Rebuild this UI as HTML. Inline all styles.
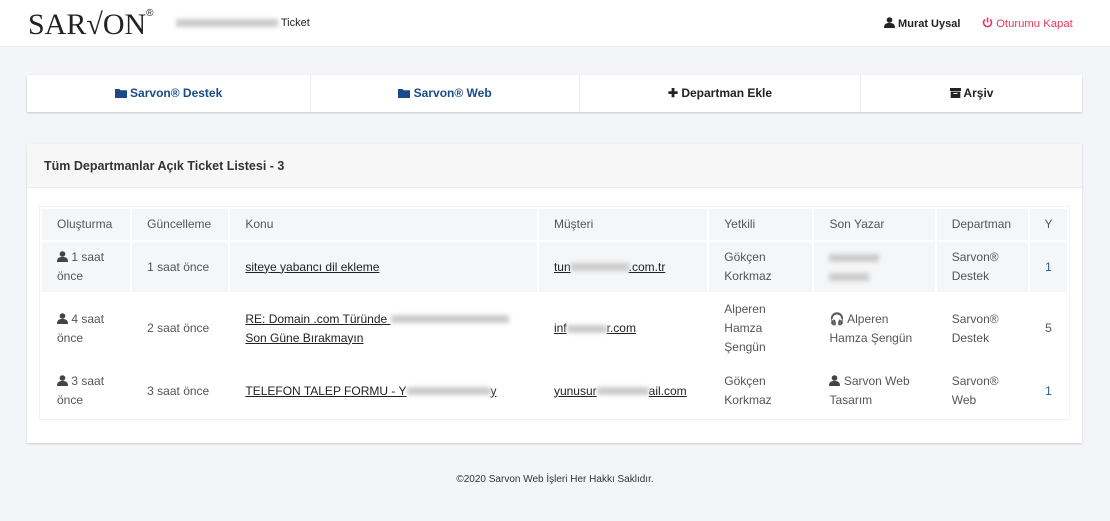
<!DOCTYPE html>
<html><head><meta charset="utf-8"><style>
*{box-sizing:border-box;margin:0;padding:0}
body{width:1110px;height:521px;background:#f4f5f8;font-family:"Liberation Sans",Arial,sans-serif;font-size:12px;color:#555;position:relative;overflow:hidden}
.top{position:absolute;left:0;top:0;width:1110px;height:47px;background:#fff;border-bottom:1px solid #e8e9ec}
.logo{position:absolute;left:28px;top:8px;font-family:"Liberation Serif",serif;font-size:30px;color:#222;letter-spacing:0}
.logo sup{font-size:10px;position:relative;top:-7px;font-family:"Liberation Sans",sans-serif}
.bc{position:absolute;left:176px;top:17px;font-size:11px;color:#222}
.blur{display:inline-block;background:#ccc;filter:blur(2px);height:8px;vertical-align:middle}
.usr{position:absolute;left:884px;top:17px;font-weight:bold;color:#222;font-size:11px}
.out{position:absolute;left:982px;top:17px;color:#e8345a;font-size:11.3px}
.nav{position:absolute;left:27px;top:75px;width:1055px;height:37px;background:#fff;box-shadow:0 1px 2px rgba(0,0,0,.18);font-weight:bold;font-size:12px}
.nav div{position:absolute;top:0;height:37px;line-height:37px;text-align:center;border-right:1px solid #eee}
.card{position:absolute;left:27px;top:144px;width:1055px;height:299px;background:#fff;box-shadow:0 1px 2px rgba(0,0,0,.15)}
.ch{height:44px;background:#f7f7f8;border-bottom:1px solid #eee;padding:15px 17px;font-weight:bold;color:#333;font-size:12.5px}
table{position:absolute;left:12px;top:62px;border-collapse:separate;border-spacing:2px;table-layout:fixed;width:1032px;border:1px solid #f3f3f3}
td{padding:0 14px 0 15px;line-height:19px;vertical-align:middle;color:#555}
tr.h td{height:31px;background:#f5f6f8}
tr.s td{background:#f5f6f8}
a{color:#222;text-decoration:underline}
.n{text-align:center;color:#1a5b9a;padding:0}
.ic{display:inline-block;vertical-align:-1px}
</style></head><body>
<div class="top">
<div class="logo">SAR√ON<sup>®</sup></div>
<div class="bc"><span class="blur" style="width:102px"></span> Ticket</div>
<div class="usr"><svg class="ic" width="11" height="11" viewBox="0 0 11 11"><circle cx="5.5" cy="3" r="2.8" fill="#222"/><path d="M0 11c0-4 2-5 5.5-5s5.5 1 5.5 5z" fill="#222"/></svg> Murat Uysal</div>
<div class="out"><svg class="ic" width="11" height="11" viewBox="0 0 11 11"><path d="M3 2.5A4 4 0 1 0 8 2.5" stroke="#e8345a" stroke-width="1.6" fill="none"/><path d="M5.5 0.5v5" stroke="#e8345a" stroke-width="1.6"/></svg> Oturumu Kapat</div>
</div>
<div class="nav">
<div style="left:0;width:284px;color:#1a4a8a"><svg class="ic" width="12" height="10" viewBox="0 0 12 10"><path d="M0 1h4.5l1 1.3H12V10H0z" fill="#1a4a8a"/></svg> Sarvon® Destek</div>
<div style="left:284px;width:269px;color:#1a4a8a"><svg class="ic" width="12" height="10" viewBox="0 0 12 10"><path d="M0 1h4.5l1 1.3H12V10H0z" fill="#1a4a8a"/></svg> Sarvon® Web</div>
<div style="left:553px;width:281px;color:#222">✚ Departman Ekle</div>
<div style="left:834px;width:221px;color:#222;border:none"><svg class="ic" width="11" height="10" viewBox="0 0 11 10"><rect x="0" y="0" width="11" height="3" fill="#222"/><rect x="0.7" y="3.6" width="9.6" height="6.4" fill="#222"/><rect x="3.5" y="5" width="4" height="1" fill="#fff"/></svg> Arşiv</div>
</div>
<div class="card">
<div class="ch">Tüm Departmanlar Açık Ticket Listesi - 3</div>
<table style="width:1031px">
<colgroup><col style="width:88px"><col style="width:96px"><col style="width:306px"><col style="width:168px"><col style="width:103px"><col style="width:120px"><col style="width:91px"><col style="width:37px"></colgroup>
<tr class="h"><td>Oluşturma</td><td>Güncelleme</td><td>Konu</td><td>Müşteri</td><td>Yetkili</td><td>Son Yazar</td><td>Departman</td><td class="n" style="color:#555">Y</td></tr>
<tr class="s" style="height:50px"><td><svg class="ic" width="11" height="11" viewBox="0 0 11 11"><circle cx="5.5" cy="3" r="2.8" fill="#444"/><path d="M0 11c0-4 2-5 5.5-5s5.5 1 5.5 5z" fill="#444"/></svg> 1 saat önce</td><td>1 saat önce</td><td><a>siteye yabancı dil ekleme</a></td><td><a>tun<span class="blur" style="width:58px"></span>.com.tr</a></td><td>Gökçen Korkmaz</td><td><span class="blur" style="width:50px"></span><br><span class="blur" style="width:40px"></span></td><td>Sarvon® Destek</td><td class="n">1</td></tr>
<tr style="height:69px"><td><svg class="ic" width="11" height="11" viewBox="0 0 11 11"><circle cx="5.5" cy="3" r="2.8" fill="#444"/><path d="M0 11c0-4 2-5 5.5-5s5.5 1 5.5 5z" fill="#444"/></svg> 4 saat önce</td><td>2 saat önce</td><td><a>RE: Domain .com Türünde <span class="blur" style="width:118px"></span> Son Güne Bırakmayın</a></td><td><a>inf<span class="blur" style="width:40px"></span>r.com</a></td><td>Alperen Hamza Şengün</td><td>🎧 Alperen Hamza Şengün</td><td>Sarvon® Destek</td><td class="n" style="color:#555">5</td></tr>
<tr style="height:52px"><td><svg class="ic" width="11" height="11" viewBox="0 0 11 11"><circle cx="5.5" cy="3" r="2.8" fill="#444"/><path d="M0 11c0-4 2-5 5.5-5s5.5 1 5.5 5z" fill="#444"/></svg> 3 saat önce</td><td>3 saat önce</td><td><a>TELEFON TALEP FORMU - Y<span class="blur" style="width:84px"></span>y</a></td><td><a>yunusur<span class="blur" style="width:52px"></span>ail.com</a></td><td>Gökçen Korkmaz</td><td><svg class="ic" width="11" height="11" viewBox="0 0 11 11"><circle cx="5.5" cy="3" r="2.8" fill="#444"/><path d="M0 11c0-4 2-5 5.5-5s5.5 1 5.5 5z" fill="#444"/></svg> Sarvon Web Tasarım</td><td>Sarvon® Web</td><td class="n">1</td></tr>
</table>
</div>
<div style="position:absolute;left:0;width:1110px;top:474px;text-align:center;font-size:10px;color:#333">©2020 Sarvon Web İşleri Her Hakkı Saklıdır.</div>
</body></html>
